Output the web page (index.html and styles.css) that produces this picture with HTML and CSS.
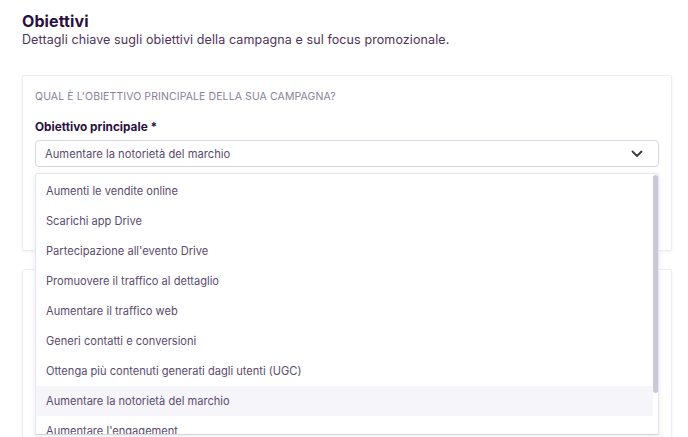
FILE: index.html
```html
<!DOCTYPE html>
<html lang="it">
<head>
<meta charset="utf-8">
<title>Obiettivi</title>
<link rel="stylesheet" href="styles.css">
</head>
<body>
<main class="page">
  <header class="head">
    <h1 class="title">Obiettivi</h1>
    <p class="subtitle">Dettagli chiave sugli obiettivi della campagna e sul focus promozionale.</p>
  </header>
  <section class="card card-main">
    <div class="eyebrow">QUAL È L'OBIETTIVO PRINCIPALE DELLA SUA CAMPAGNA?</div>
    <div class="field-label">Obiettivo principale *</div>
    <div class="select-wrap">
      <div class="select">
        <span class="select-value">Aumentare la notorietà del marchio</span>
        <svg class="chev" width="12" height="8" viewBox="0 0 12 8"><polyline points="1.5,1.5 6,6 10.5,1.5" fill="none" stroke="#3f3a44" stroke-width="1.8" stroke-linecap="round" stroke-linejoin="round"/></svg>
      </div>
      <div class="menu">
        <ul class="options">
          <li class="opt">Aumenti le vendite online</li>
          <li class="opt">Scarichi app Drive</li>
          <li class="opt">Partecipazione all'evento Drive</li>
          <li class="opt">Promuovere il traffico al dettaglio</li>
          <li class="opt">Aumentare il traffico web</li>
          <li class="opt">Generi contatti e conversioni</li>
          <li class="opt">Ottenga più contenuti generati dagli utenti (UGC)</li>
          <li class="opt opt-active">Aumentare la notorietà del marchio</li>
          <li class="opt">Aumentare l'engagement</li>
        </ul>
        <div class="scrollbar"></div>
      </div>
    </div>
  </section>
  <section class="card card-second"></section>
</main>
</body>
</html>
```

FILE: styles.css
```css
html, body {
  margin: 0;
  padding: 0;
  background: #ffffff;
  overflow: hidden;
}
body {
  font-family: "Inter", "Liberation Sans", sans-serif;
  color: #2b1a3a;
}
.page {
  padding: 11px 16px 0 22px;
  display: flex;
  flex-direction: column;
}
.head {
  margin-bottom: 27px;
}
.title {
  margin: 0;
  font-size: 16px;
  line-height: 20px;
  font-weight: 700;
  color: #2a1040;
  letter-spacing: 0.1px;
}
.subtitle {
  margin: 1px 0 0;
  font-size: 12.5px;
  line-height: 16px;
  letter-spacing: 0.1px;
  color: #4e3358;
}
.card {
  background: #fff;
  border: 1px solid #eeedf3;
  border-radius: 2px;
  box-shadow: 0 1px 3px rgba(40, 30, 70, 0.06);
}
.card-main {
  padding: 14px 12px 83px;
  position: relative;
  z-index: 2;
}
.card-second {
  margin-top: 18px;
  height: 200px;
}
.eyebrow {
  font-size: 10.5px;
  line-height: 14px;
  color: #8a7f9b;
  letter-spacing: 0.1px;
}
.field-label {
  margin-top: 15px;
  font-size: 11.8px;
  line-height: 16px;
  font-weight: 700;
  color: #2a1040;
}
.select-wrap {
  position: relative;
  margin-top: 5px;
}
.select {
  height: 25px;
  border: 1px solid #d8d4e0;
  border-radius: 4px;
  display: flex;
  align-items: center;
  justify-content: space-between;
  padding: 0 15px 0 9px;
}
.select-value {
  font-size: 11.2px;
  color: #5b4b6c;
}
.chev {
  display: block;
}
.menu {
  position: absolute;
  left: 0;
  right: 0;
  top: 33px;
  height: 260px;
  background: #fff;
  border: 1px solid #e6e4ec;
  border-bottom-color: #d6d5de;
  border-radius: 3px 3px 0 0;
  box-shadow: 0 2px 6px rgba(40, 30, 70, 0.08);
  overflow: hidden;
  z-index: 5;
}
.options {
  list-style: none;
  margin: 0;
  padding: 2px 5px 0 0;
}
.opt {
  height: 30px;
  line-height: 30px;
  padding-left: 10px;
  font-size: 11.1px;
  color: #5b4b6e;
  white-space: nowrap;
}
.opt-active {
  background: #f6f5fa;
}
.scrollbar {
  position: absolute;
  right: 0;
  top: 1px;
  width: 5px;
  height: 218px;
  border-radius: 3px;
  background: #cac7d7;
}
```
